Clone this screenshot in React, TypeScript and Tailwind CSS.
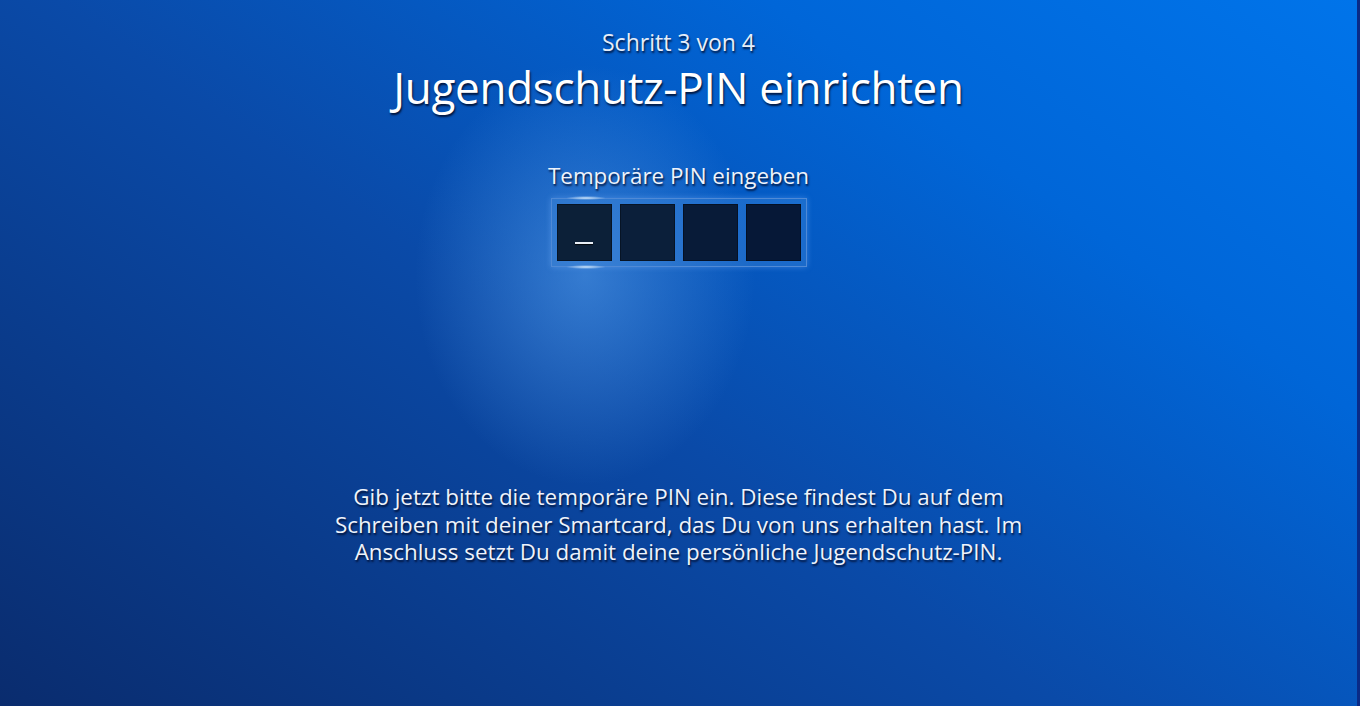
export default function App() {
  const cells = [0, 1, 2, 3];

  return (
    <div
      className="flex h-[706px] w-[1360px] overflow-hidden border-r-[3px] border-[#0a2a86] bg-[radial-gradient(ellipse_170px_210px_at_585px_275px,rgba(90,160,235,0.55),rgba(90,160,235,0)_100%),linear-gradient(35deg,#0a2c6e_0%,#0a4aa8_45%,#0066d8_75%,#0074ea_100%)] text-white"
      style={{ fontFamily: '"Open Sans", "Noto Sans", sans-serif' }}
    >
      <div className="flex w-full flex-col items-center pt-[27px] [text-shadow:1px_2px_2px_rgba(0,10,40,0.85)]">
        <div className="text-[23px] leading-[30px] text-[#e6eef9]">Schritt 3 von 4</div>
        <h1 className="mt-[4px] text-[44px] leading-[52px] tracking-[-0.3px]">Jugendschutz-PIN einrichten</h1>

        <div className="mt-[48px] text-[22.4px] leading-[30px] text-[#eef3fb]">Temporäre PIN eingeben</div>

        <div className="relative mt-[7px] flex gap-[8px] border border-[#4f8ad6] bg-[rgba(70,140,220,0.35)] p-[5px] shadow-[0_0_6px_rgba(120,180,255,0.4)]">
          <span className="absolute left-[14px] top-[-3px] h-[4px] w-[40px] rounded-full bg-[radial-gradient(closest-side,rgba(220,240,255,0.9),rgba(220,240,255,0))]" />
          <span className="absolute bottom-[-3px] left-[14px] h-[4px] w-[40px] rounded-full bg-[radial-gradient(closest-side,rgba(220,240,255,0.9),rgba(220,240,255,0))]" />
          {cells.map((i) => (
            <div
              key={i}
              className={
                i === 0
                  ? 'flex h-[57px] w-[55px] items-end justify-center bg-[#0c2038] pb-[17px] shadow-[inset_0_0_0_1px_rgba(0,0,0,0.35)]'
                  : i === 1
                    ? 'h-[57px] w-[55px] bg-[#0b1f3a] shadow-[inset_0_0_0_1px_rgba(0,0,0,0.35)]'
                    : i === 2
                      ? 'h-[57px] w-[55px] bg-[#081b38] shadow-[inset_0_0_0_1px_rgba(0,0,0,0.35)]'
                      : 'h-[57px] w-[55px] bg-[#061837] shadow-[inset_0_0_0_1px_rgba(0,0,0,0.35)]'
              }
            >
              {i === 0 && <span className="h-[2px] w-[18px] bg-[#e8eef6] shadow-[0_1px_1px_rgba(0,0,0,0.8)]" />}
            </div>
          ))}
        </div>

        <p className="mt-[216px] w-[760px] text-center text-[22.4px] leading-[27.5px] text-[#eef3fb]">
          Gib jetzt bitte die temporäre PIN ein. Diese findest Du auf dem
          <br />
          Schreiben mit deiner Smartcard, das Du von uns erhalten hast. Im
          <br />
          Anschluss setzt Du damit deine persönliche Jugendschutz-PIN.
        </p>
      </div>
    </div>
  );
}
